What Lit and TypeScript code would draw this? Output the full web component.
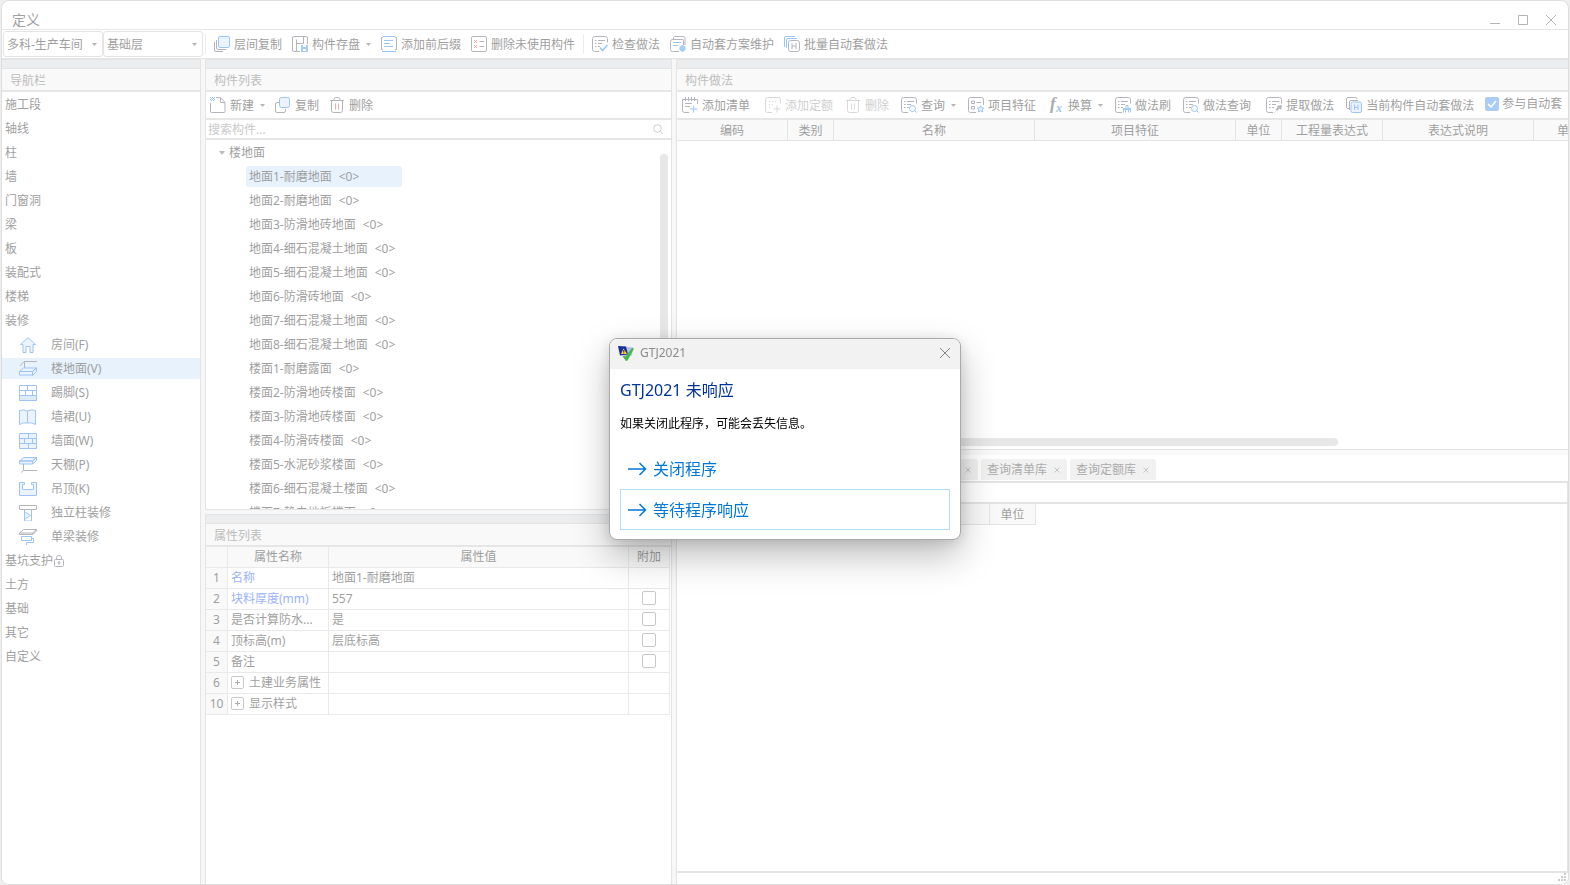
import { LitElement, html, svg, css, nothing, TemplateResult, SVGTemplateResult } from "lit";
import { customElement, property, state } from "lit/decorators.js";
import { classMap } from "lit/directives/class-map.js";

const base = css`
  * { box-sizing: border-box; }
  button, input, select {
    font: inherit;
    color: inherit;
    border: 0;
    padding: 0;
    margin: 0;
    background: none;
  }
  svg { display: block; flex: none; fill: none; }
  .g { stroke: #b4b5bc; }
  .b { stroke: #9cc5f6; }
  .r { stroke: #f3adad; }
  .f { fill: #ebf4fe; }
  .fb { fill: #a6ccf7; }
  .fr { fill: #f3adad; }
  .fg { fill: #b4b5bc; }
`;

/* 16 x 16 toolbar glyphs */
const sheet = svg`<path class="g" d="M7 15.500H2.500Q.5 15.500 .5 13.500V2.500Q.5.500 2.500.500H13.500Q15.500.500 15.500 2.500V6.500"/>
  <path class="g" d="M3 4.500h1.500M6 4.500h7M3 7.500h1.500M6 7.500h4M3 10.500h1.500M6 10.500h2"/>`;

const glyphs: Record<string, SVGTemplateResult> = {
  layers: svg`<path class="g" d="M2.500 4v8q0 1.500 1.500 1.500h8M.5 6v8q0 1.500 1.500 1.500h7"/><rect class="b f" x="4.500" y=".5" width="11" height="11" rx="1.500"/>`,
  save: svg`<path class="g" d="M8 15.500H2q-1.500 0-1.500-1.500V2Q.5.500 2 .5h12Q15.500.500 15.500 2v6M4.500 3.500v12M4.500 7.500h7M11.500 .5v7"/><path class="fb" d="M9 9h7v7H9z"/><path d="M11 9h3v2h-3zM11 13h3v2h-3z" fill="#fff"/>`,
  affix: svg`<path class="g" d="M2 1.500H.5v12H2M14 1.500h1.500v12H14"/><path class="b" d="M2 .5h12M3 4.500h9M3 7.500h6M3 10.500h9M1 15.500h14"/>`,
  unused: svg`<rect class="g" x=".5" y=".5" width="15" height="15" rx="1.500"/><path class="r" d="M3 4l3 3M6 4L3 7M3 9l3 3M6 9l-3 3"/><path class="g" d="M8.500 5.500H13M8.500 10.500H13"/>`,
  check: svg`${sheet}<path class="b" stroke-width="1.500" d="M8 11.500l2.500 3 5-5.500"/>`,
  scheme: svg`<path class="g" d="M3.500 3V1.500q0-1 1-1h9q1.500 0 1.500 1.500V9M13.500 9V4.500q0-1-1-1h-10q-2 0-2 2v8q0 2 2 2H9"/><path class="b" d="M3 6.500h8M3 9.500h5"/><path class="fb" d="M12.500 9l3 1.700v3.500l-3 1.700-3-1.700v-3.500z"/>`,
  batch: svg`<path class="b" d="M.5 11V2q0-1.500 1.500-1.500h9M2.500 12V4q0-1.500 1.500-1.500h9"/><rect class="g" x="4.500" y="4.500" width="11" height="11" rx="2"/><path class="g" d="M8 7v6M12 7v6M8 10h4"/>`,
  create: svg`<path class="g" d="M.5 6v8.500q0 1 1 1h12.500q1 0 1-1V5.500L10.500.500H6M10.500.500v5H15"/><path class="b" stroke-dasharray="1 1" d="M0 .5h5M1 1.500h4M0 2.500h5M1 3.500h4"/>`,
  copy: svg`<path class="g" d="M4 5.500H2q-1.500 0-1.500 1.500v7q0 1.500 1.500 1.500h7q1.500 0 1.500-1.500v-2"/><rect class="b f" x="4.500" y=".5" width="10" height="10" rx="2"/>`,
  trash: svg`<path class="g" d="M1 3.500h14M2.500 4v9.500q0 2 2 2h7q2 0 2-2V4M5 3.500v-1q0-2 2-2h2q2 0 2 2v1"/><path class="r" d="M6.500 6.500v6M9.500 6.500v6"/>`,
  trashOff: svg`<path class="g" d="M1 3.500h14M2.500 4v9.500q0 2 2 2h7q2 0 2-2V4M5 3.500v-1q0-2 2-2h2q2 0 2 2v1M6.500 6.500v6M9.500 6.500v6"/>`,
  addList: svg`<path class="g" d="M7 15.500H2.500Q.5 15.500.5 13.500V2.500H15.500V7M3.500 0v4M6.500 0v4M9.500 0v4M12.500 0v4M3 6.500h7M3 9.500h5"/><path class="b" d="M8 12h7.500M11.700 8.500v7"/>`,
  addQuota: svg`<path class="g" d="M7 15.500H2.500Q.5 15.500 .5 13.500V2.500Q.5.500 2.500.500H13.500Q15.500.500 15.500 2.500V6.500M8.500 12h7M12 8.500v7"/><path class="g" stroke-dasharray="1 2" d="M4 4.500h9M4 7.500h6M4 10.500h3"/>`,
  query: svg`${sheet}<circle class="b" cx="11.500" cy="11.500" r="3"/><path class="b" d="M13.700 13.700l2 2"/>`,
  feature: svg`<path class="g" d="M8 15.500H2.500Q.5 15.500 .5 13.500V2.500Q.5.500 2.500.500H13.500Q15.500.500 15.500 2.500V8M3.500 4h3v2.500h-3zM3.500 9.500h3V12h-3zM8.500 5.500H13"/><path class="b f" d="M12.500 8.700l1 2.200 2.300.3-1.700 1.500.4 2.300-2-1.200-2 1.200.4-2.300-1.700-1.500 2.300-.3z"/>`,
  fx: svg`<text x="2" y="12" font-family="Liberation Serif, serif" font-style="italic" font-weight="bold" font-size="17" fill="#a9aab1">f</text><text x="8" y="15" font-family="Liberation Serif, serif" font-style="italic" font-weight="bold" font-size="12" fill="#9cc5f6">x</text>`,
  brush: svg`${sheet}<path class="b" d="M8.500 15.500v-4h7v4M11 11V8.500h2V11M10.500 13v2.500M13.500 13v2.500"/><path class="fb" d="M8 11h8v2H8z"/>`,
  extract: svg`${sheet}<path class="fg" d="M16 8l-1 5-1.500-1.500L11 14l-1.500-1.500L12 10l-1.500-1z"/><path class="b" d="M9.500 14.500l-1 1"/>`,
  current: svg`<path class="g" d="M3 11.500H2q-1.500 0-1.500-1.500V2Q.5.500 2 .5h7.500q1.500 0 1.500 1.500M3.500 13V5q0-1.500 1.500-1.500h7"/><rect class="b f" x="5" y="5" width="10.500" height="10.500" rx="1.500"/><path class="b" d="M8.500 7.500v5.500M12 7.500v5.500M8.500 10.300H12"/>`,
};

/* 18 x 16 navigation glyphs */
const navGlyphs: Record<string, SVGTemplateResult> = {
  room: svg`<path class="b f" d="M1.500 7.500L9 .7l7.500 6.800H14v8h-3V9.500H7v6H4v-8z"/>`,
  floor: svg`<path class="g" d="M1 5L5 .5h13M5.500 1v6"/><path class="b f" d="M.5 10.500l4-3.500h13l-4 3.500zM.5 10.500h13V14H.5zM13.500 10.500l4-3.500v3.500l-4 4z"/>`,
  skirting: svg`<path class="b" d="M.5.500h17v15H.5zM.5 5.500h17M8.500.500v5M6.500 5.500v5M13.500 5.500v5"/><path class="b" fill="#dcebfd" d="M.5 10.500h17v5H.5z"/>`,
  dado: svg`<path class="b f" d="M.5 1.500q4-1.500 8 .5v12q-4-1-8 1.500zM8.500 2q4-2 8-.5v14q-4-2.500-8-1.500z"/>`,
  wall: svg`<path class="b f" d="M.5.500h17v15H.5z"/><path class="b" d="M.5 5.500h17M.5 10.500h17M9.500.500v5M5.500 5.500v5M13.500 5.500v5M9.500 10.500v5"/>`,
  canopy: svg`<path class="b f" d="M.5 4l4-3.500h13l-4 3.500zM.5 4h13v3H.5zM13.500 4l4-3.500v3l-4 3.500z"/><path class="g" d="M4.500 7v6.500L2 15.500M4.500 13.500H18"/>`,
  ceiling: svg`<path class="b f" d="M.5 1.500h5v2h-2v5h11v-5h-2v-2h5v13H.5z"/>`,
  column: svg`<path class="g" d="M.5.500h17v4H.5zM5.500 5v2"/><path class="b" d="M5.500 5v11h7V5"/><path class="b f" d="M5.500 6.500l6 4-6 4z"/>`,
  beam: svg`<path class="g" d="M.5 4l4-3.500h13l-4 3.500zM.5 4v1.500h13V4M13.500 5.500l4-3.500V.5"/><path class="b" d="M2.500 7.500h10v4h-10zM12.500 9.500h2v4h-7V16"/>`,
};

const icon = (name: string) => html`<svg width="16" height="16" viewBox="0 0 16 16" aria-hidden="true">${glyphs[name]}</svg>`;
const caret = html`<svg class="caret" width="5" height="3" viewBox="0 0 5 3" aria-hidden="true"><path d="M0 0h5L2.500 3z" fill="#b5b5b5"/></svg>`;

interface Tool {
  icon: string;
  label: string;
  menu?: boolean;
  off?: boolean;
  wide?: boolean;
}

@customElement("tool-button")
class ToolButton extends LitElement {
  @property({ attribute: false }) tool!: Tool;

  static styles = [base, css`
    :host { display: block; flex: none; }
    .btn { display: flex; align-items: center; gap: 4px; height: 23px; white-space: nowrap; line-height: 20px; }
    .label { padding-top: 2px; }
    .caret { margin-left: 2px; }
    .off { opacity: 0.5; }
  `];

  render() {
    const t = this.tool;
    return html`<button class=${classMap({ btn: true, off: !!t.off })} ?disabled=${t.off}>
      ${icon(t.icon)}<span class="label">${t.label}</span>${t.menu ? caret : nothing}
    </button>`;
  }
}

@customElement("tool-strip")
class ToolStrip extends LitElement {
  @property({ attribute: false }) tools: Tool[] = [];

  static styles = [base, css`
    :host { display: flex; align-items: center; gap: 10px; flex: none; }
    .wide { margin-right: 3px; }
  `];

  render() {
    return this.tools.map((t) => html`<tool-button class=${classMap({ wide: !!t.wide })} .tool=${t}></tool-button>`);
  }
}

@customElement("nav-tree")
class NavTree extends LitElement {
  @state() private selected = "楼地面(V)";

  private before = ["施工段", "轴线", "柱", "墙", "门窗洞", "梁", "板", "装配式", "楼梯", "装修"];
  private children_: [string, string][] = [
    ["room", "房间(F)"], ["floor", "楼地面(V)"], ["skirting", "踢脚(S)"], ["dado", "墙裙(U)"], ["wall", "墙面(W)"],
    ["canopy", "天棚(P)"], ["ceiling", "吊顶(K)"], ["column", "独立柱装修"], ["beam", "单梁装修"],
  ];
  private after = ["基坑支护", "土方", "基础", "其它", "自定义"];

  static styles = [base, css`
    :host { display: flex; flex-direction: column; gap: 3px; padding-top: 2px; }
    .row { display: flex; align-items: center; height: 21px; padding-left: 3px; width: 100%; text-align: left; line-height: 21px; }
    .child { padding-left: 17px; gap: 14px; }
    .on { background: #e7f2fd; }
  `];

  private group(name: string) {
    const lock = name === "基坑支护"
      ? html`<svg width="12" height="12" viewBox="0 0 12 12" aria-hidden="true"><rect class="g" x="1.500" y="4.500" width="9" height="7" rx="1"/><path class="g" d="M3.500 4.500v-2q0-2 2.500-2t2.500 2v2M6 8v2"/><circle class="g" cx="6" cy="7.500" r="1"/></svg>`
      : nothing;
    return html`<button class="row">${name}${lock}</button>`;
  }

  render() {
    return html`
      ${this.before.map((n) => this.group(n))}
      ${this.children_.map(([g, n]) => html`
        <button class=${classMap({ row: true, child: true, on: n === this.selected })} @click=${() => (this.selected = n)}>
          <svg width="18" height="16" viewBox="0 0 18 16" aria-hidden="true">${navGlyphs[g]}</svg>${n}
        </button>`)}
      ${this.after.map((n) => this.group(n))}
    `;
  }
}

@customElement("component-tree")
class ComponentTree extends LitElement {
  @state() private selected = 0;

  private items = [
    "地面1-耐磨地面", "地面2-耐磨地面", "地面3-防滑地砖地面", "地面4-细石混凝土地面", "地面5-细石混凝土地面",
    "地面6-防滑砖地面", "地面7-细石混凝土地面", "地面8-细石混凝土地面", "楼面1-耐磨露面", "楼面2-防滑地砖楼面",
    "楼面3-防滑地砖楼面", "楼面4-防滑砖楼面", "楼面5-水泥砂浆楼面", "楼面6-细石混凝土楼面", "楼面7-静电地板楼面",
  ];

  static styles = [base, css`
    :host { display: flex; position: relative; overflow: hidden; padding-top: 2px; }
    .list { display: flex; flex-direction: column; align-items: flex-start; gap: 3px; }
    .row { display: flex; flex: none; align-items: center; height: 21px; line-height: 21px; white-space: nowrap; }
    .root { padding-left: 13px; gap: 4px; }
    .item { margin-left: 40px; padding-left: 3px; gap: 7px; width: 156px; border-radius: 3px; }
    .on { background: #e7f2fd; }
    .bar { position: absolute; top: 14px; right: 3px; width: 8px; height: 240px; border-radius: 4px; background: #e7e7e7; }
  `];

  render() {
    return html`
      <div class="list">
        <button class="row root"><svg width="6" height="4" viewBox="0 0 6 4" aria-hidden="true"><path d="M0 0h6L3 4z" fill="#bbb"/></svg>楼地面</button>
        ${this.items.map((n, i) => html`
          <button class=${classMap({ row: true, item: true, on: i === this.selected })} @click=${() => (this.selected = i)}>
            <span>${n}</span><span>&lt;0&gt;</span>
          </button>`)}
      </div>
      <div class="bar"></div>
    `;
  }
}

interface Prop {
  no: number;
  name: string;
  value?: string;
  key?: boolean;
  tick?: boolean;
  group?: boolean;
}

@customElement("property-table")
class PropertyTable extends LitElement {
  private rows: Prop[] = [
    { no: 1, name: "名称", value: "地面1-耐磨地面", key: true },
    { no: 2, name: "块料厚度(mm)", value: "557", key: true, tick: true },
    { no: 3, name: "是否计算防水...", value: "是", tick: true },
    { no: 4, name: "顶标高(m)", value: "层底标高", tick: true },
    { no: 5, name: "备注", tick: true },
    { no: 6, name: "土建业务属性", group: true },
    { no: 10, name: "显示样式", group: true },
  ];

  static styles = [base, css`
    :host { display: block; padding-right: 1px; }
    table { width: 100%; table-layout: fixed; border-collapse: separate; border-spacing: 0; }
    th, td {
      height: 21px; padding: 0 0 0 3px; border: solid #e9e9e9; border-width: 0 1px 1px 0;
      font-weight: normal; line-height: 20px; white-space: nowrap; overflow: hidden; text-align: left;
    }
    thead th, tbody th { background: #f9f9f9; text-align: center; padding: 0; }
    .no { width: 22px; }
    .name { width: 101px; }
    .add { width: 41px; }
    .key { color: #9bb2fd; }
    .mid { text-align: center; padding: 0 0 1px; }
    .group { display: flex; align-items: center; gap: 5px; }
    .plus { display: grid; place-items: center; width: 13px; height: 13px; border: 1px solid #c9c9c9; border-radius: 2px; }
    input { appearance: none; display: block; width: 14px; height: 14px; margin: 0 auto; border: 1px solid #c8c8c8; border-radius: 2px; }
  `];

  render() {
    return html`
      <table>
        <thead>
          <tr><th class="no"></th><th class="name">属性名称</th><th>属性值</th><th class="add">附加</th></tr>
        </thead>
        <tbody>
          ${this.rows.map((r) => html`
            <tr>
              <th>${r.no}</th>
              <td class=${classMap({ key: !!r.key })}>
                ${r.group
                  ? html`<div class="group"><button class="plus" aria-label="展开"><svg width="5" height="5" viewBox="0 0 5 5"><path d="M0 2.500h5M2.500 0v5" stroke="#aaa"/></svg></button>${r.name}</div>`
                  : r.name}
              </td>
              <td>${r.value ?? nothing}</td>
              <td class="mid">${r.tick ? html`<input type="checkbox" aria-label=${r.name} />` : nothing}</td>
            </tr>`)}
        </tbody>
      </table>
    `;
  }
}

@customElement("hang-dialog")
class HangDialog extends LitElement {
  static styles = [base, css`
    :host { position: fixed; inset: 0; display: grid; place-items: center; padding-bottom: 7px; pointer-events: none; }
    .dialog {
      pointer-events: auto; width: 352px; background: #fff; border: 1px solid #a9a9a9; border-radius: 8px; overflow: hidden;
      box-shadow: 0 16px 36px rgba(0, 0, 0, 0.26), 0 2px 14px rgba(0, 0, 0, 0.12);
    }
    .bar { display: flex; align-items: center; gap: 6px; height: 30px; padding: 0 9px 2px 8px; background: #f2f2f2; color: #8b8b8b; }
    .bar span { flex: 1; line-height: 20px; }
    .bar button { display: block; }
    .body { padding: 9px 10px; }
    h1 { margin: 0; color: #003399; font-size: 16px; font-weight: normal; line-height: 24px; }
    p { margin: 12px 0 14px; color: #000; line-height: 20px; }
    .cmd {
      display: flex; align-items: center; gap: 6px; width: 100%; height: 41px; padding: 1px 0 0 7px;
      border: 1px solid transparent; color: #0077d7; font-size: 16px; line-height: 24px;
    }
    .focus { border-color: #b5dbf7; }
  `];

  private arrow = html`<svg width="19" height="14" viewBox="0 0 19 14" aria-hidden="true"><path d="M0 7h17.500M11.500 1l6 6-6 6" stroke="#0077d7" stroke-width="1.500"/></svg>`;

  render() {
    return html`
      <div class="dialog" role="dialog" aria-labelledby="t">
        <div class="bar">
          <svg width="16" height="16" viewBox="0 0 16 16" aria-hidden="true">
            <path d="M6 1.500l9 1-1 8L6 12z" fill="#b9c4d6"/>
            <path d="M0 1l8 .5 2 8-8 1z" fill="#1a2f9e"/>
            <path d="M5.500 3.500L9 9H3z" fill="#ffd93a"/><path d="M5.800 5v2M5.800 7.500v1" stroke="#222"/>
            <path d="M4 10.500l3.500 1L14 3l2 .5L9.500 15.500 8 16z" fill="#45b649"/>
          </svg>
          <span>GTJ2021</span>
          <button aria-label="关闭"><svg width="12" height="12" viewBox="0 0 12 12"><path d="M1 1l10 10M11 1L1 11" stroke="#858585"/></svg></button>
        </div>
        <div class="body">
          <h1 id="t">GTJ2021 未响应</h1>
          <p>如果关闭此程序，可能会丢失信息。</p>
          <button class="cmd">${this.arrow}关闭程序</button>
          <button class="cmd focus">${this.arrow}等待程序响应</button>
        </div>
      </div>
    `;
  }
}

@customElement("app-root")
class AppRoot extends LitElement {
  static styles = [base, css`
    :host {
      display: flex; height: 100vh; padding: 0 1px 1px; background: #efefef; color: #9f9f9f;
      font: 12px/20px "Noto Sans", "Noto Sans CJK SC", sans-serif;
    }
    .window { flex: 1; min-width: 0; display: flex; flex-direction: column; border: 1px solid #dedede; border-radius: 8px; overflow: hidden; background: #fff; }
    .title { display: flex; align-items: center; height: 29px; padding: 9px 12px 0 10px; border-bottom: 1px solid #e6e6e6; font-size: 14px; }
    .title h1 { flex: 1; margin: 0; font: inherit; }
    .winbtns { display: flex; gap: 18px; }
    .top { display: flex; align-items: center; height: 29px; padding-left: 1px; border-bottom: 1px solid #e4e4e4; }
    .combo { display: grid; align-items: center; width: 100px; }
    .combo > * { grid-area: 1 / 1; }
    .combo select { appearance: none; height: 26px; padding: 1px 3px 0; border: 1px solid #e4e4e4; border-radius: 3px; line-height: 20px; }
    .combo .caret { justify-self: end; margin-right: 6px; pointer-events: none; }
    .sep { width: 1px; height: 20px; margin: 0 8px; background: #ececec; }
    .sep.first { margin: 0 8px 0 2px; }

    .main { flex: 1; min-height: 0; display: grid; grid-template-columns: 199px 467px minmax(0, 1fr); gap: 4px; background: #f7f7f7; }
    .split { display: grid; grid-template-rows: minmax(0, 450fr) minmax(0, 370fr); gap: 4px; min-height: 0; }
    .work { display: grid; grid-template-rows: minmax(0, 390fr) minmax(0, 434fr); min-height: 0; background: #fff; }
    .panel { display: flex; flex-direction: column; min-width: 0; min-height: 0; background: #fff; border: solid #e4e4e4; border-width: 1px 0 0 1px; overflow: hidden; }
    .nav { border-width: 1px 1px 0 0; }
    .boxed { border-width: 1px; }
    .low { border-width: 1px 1px 0; }
    .grip { flex: none; height: 9px; background: #ecedef; border-bottom: 1px solid #e4e4e4; }
    .head { flex: none; height: 23px; margin: 0; padding: 1px 8px 0; border-bottom: 2px solid #e6e6e6; background: #f9f9f9; color: #bdbdbd; font: inherit; line-height: 21px; }
    .bar { flex: none; display: flex; align-items: center; height: 28px; padding-left: 4px; border-bottom: 2px solid #e6e6e6; white-space: nowrap; }
    .methodbar { gap: 11px; padding-left: 5px; }
    .methodbar tool-strip { gap: 12px; }
    .search { flex: none; display: flex; align-items: center; height: 20px; padding: 0 8px 0 2px; border-bottom: 2px solid #e6e6e6; }
    .search input { flex: 1; height: 18px; padding-top: 2px; outline: 0; }
    .search input::placeholder { color: #c9c9c9; opacity: 1; }
    component-tree { flex: 1; min-height: 0; }

    table { border-collapse: separate; border-spacing: 0; table-layout: fixed; }
    th { height: 21px; padding: 1px 0 0; border: solid #e4e4e4; border-width: 0 1px 1px 0; background: #f9f9f9; font-weight: normal; line-height: 19px; white-space: nowrap; }
    .methods { width: 928px; }
    .scroll { flex: 1; overflow: hidden; }
    .hbar { flex: none; width: 661px; height: 8px; margin-bottom: 3px; border-radius: 4px; background: #e7e7e7; }
    .join { display: flex; align-items: center; gap: 3px; padding-bottom: 2px; }
    .join input { appearance: none; width: 14px; height: 14px; border-radius: 2px; background: #a9cdf6; }
    .tick { display: grid; }
    .tick > * { grid-area: 1 / 1; }
    .tick svg { pointer-events: none; }

    .lower { display: flex; flex-direction: column; min-height: 0; border: solid #e4e4e4; border-width: 1px 0 0 1px; }
    .rim { flex: none; height: 5px; background: #f9f9f9; }
    .tabs { flex: none; display: flex; align-items: flex-end; gap: 3px; height: 26px; padding: 0 0 1px 215px; }
    .tab { display: flex; align-items: center; justify-content: space-between; width: 86px; height: 21px; padding: 0 7px 0 6px; border-radius: 3px 3px 0 0; background: #f1f1f1; color: #ababab; }
    .pane { flex: 1; min-height: 0; border: solid #e4e4e4; border-width: 2px 1px 2px 0; }
    .strip { height: 21px; border-bottom: 2px solid #e4e4e4; }
    .prices { width: 359px; }
    .foot { flex: none; display: flex; justify-content: flex-end; height: 11px; padding-right: 2px; }
  `];

  private topA: Tool[] = [
    { icon: "layers", label: "层间复制" },
    { icon: "save", label: "构件存盘", menu: true },
    { icon: "affix", label: "添加前后缀" },
    { icon: "unused", label: "删除未使用构件" },
  ];
  private topB: Tool[] = [
    { icon: "check", label: "检查做法" },
    { icon: "scheme", label: "自动套方案维护" },
    { icon: "batch", label: "批量自动套做法" },
  ];
  private listTools: Tool[] = [
    { icon: "create", label: "新建", menu: true },
    { icon: "copy", label: "复制" },
    { icon: "trash", label: "删除" },
  ];
  private methodTools: Tool[] = [
    { icon: "addList", label: "添加清单", wide: true },
    { icon: "addQuota", label: "添加定额", off: true },
    { icon: "trashOff", label: "删除", off: true },
    { icon: "query", label: "查询", menu: true },
    { icon: "feature", label: "项目特征" },
    { icon: "fx", label: "换算", menu: true },
    { icon: "brush", label: "做法刷" },
    { icon: "query", label: "做法查询", wide: true },
    { icon: "extract", label: "提取做法" },
    { icon: "current", label: "当前构件自动套做法" },
  ];
  private columns: [string, number][] = [
    ["编码", 111], ["类别", 46], ["名称", 201], ["项目特征", 201], ["单位", 46], ["工程量表达式", 101], ["表达式说明", 151], ["单价", 71],
  ];

  private combo(label: string, value: string): TemplateResult {
    return html`<div class="combo"><select aria-label=${label}><option>${value}</option></select>${caret}</div>`;
  }

  private tab(label: string): TemplateResult {
    return html`<div class="tab"><span>${label}</span><button aria-label="关闭标签"><svg width="6" height="6" viewBox="0 0 6 6"><path d="M.5.500l5 5M5.500.500l-5 5" stroke="#c4c4c4"/></svg></button></div>`;
  }

  render() {
    return html`
      <div class="window">
        <header class="title">
          <h1>定义</h1>
          <div class="winbtns">
            <button aria-label="最小化"><svg width="10" height="10" viewBox="0 0 10 10"><path d="M0 8.500h10" stroke="#b5b5b5"/></svg></button>
            <button aria-label="最大化"><svg width="10" height="10" viewBox="0 0 10 10"><path d="M.5.500h9v9h-9z" stroke="#b5b5b5"/></svg></button>
            <button aria-label="关闭"><svg width="10" height="10" viewBox="0 0 10 10"><path d="M0 0l10 10M10 0L0 10" stroke="#b5b5b5"/></svg></button>
          </div>
        </header>

        <div class="top">
          ${this.combo("工程", "多科-生产车间")}${this.combo("楼层", "基础层")}
          <div class="sep first"></div>
          <tool-strip .tools=${this.topA}></tool-strip>
          <div class="sep"></div>
          <tool-strip .tools=${this.topB}></tool-strip>
        </div>

        <main class="main">
          <nav class="panel nav">
            <div class="grip"></div>
            <h2 class="head">导航栏</h2>
            <nav-tree></nav-tree>
          </nav>

          <div class="split">
            <section class="panel boxed">
              <div class="grip"></div>
              <h2 class="head">构件列表</h2>
              <div class="bar"><tool-strip .tools=${this.listTools}></tool-strip></div>
              <div class="search">
                <input type="text" placeholder="搜索构件..." aria-label="搜索构件" />
                <svg width="10" height="10" viewBox="0 0 10 10" aria-hidden="true"><circle cx="4.500" cy="4.500" r="3.800" stroke="#cdcdcd"/><path d="M7.200 7.200L10 10" stroke="#cdcdcd"/></svg>
              </div>
              <component-tree></component-tree>
            </section>
            <section class="panel low">
              <div class="grip"></div>
              <h2 class="head">属性列表</h2>
              <property-table></property-table>
            </section>
          </div>

          <div class="work">
            <section class="panel">
              <div class="grip"></div>
              <h2 class="head">构件做法</h2>
              <div class="bar methodbar">
                <tool-strip .tools=${this.methodTools}></tool-strip>
                <label class="join">
                  <span class="tick"><input type="checkbox" checked /><svg width="14" height="14" viewBox="0 0 14 14" aria-hidden="true"><path d="M3 7l3 3 5-6" stroke="#fff" stroke-width="1.500"/></svg></span>
                  参与自动套
                </label>
              </div>
              <div class="scroll">
                <table class="methods">
                  <colgroup>${this.columns.map(([, w]) => html`<col width=${w} />`)}</colgroup>
                  <thead><tr>${this.columns.map(([n]) => html`<th>${n}</th>`)}</tr></thead>
                </table>
              </div>
              <div class="hbar"></div>
            </section>

            <section class="lower">
              <div class="rim"></div>
              <div class="tabs">${this.tab("")}${this.tab("查询清单库")}${this.tab("查询定额库")}</div>
              <div class="pane">
                <div class="strip"></div>
                <table class="prices">
                  <colgroup><col /><col width="46" /></colgroup>
                  <thead><tr><th></th><th>单位</th></tr></thead>
                </table>
              </div>
              <div class="foot">
                <svg width="8" height="8" viewBox="0 0 8 8" aria-hidden="true"><path d="M6 0h2v2H6zM3 3h2v2H3zM6 3h2v2H6zM0 6h2v2H0zM3 6h2v2H3zM6 6h2v2H6z" fill="#cacaca"/></svg>
              </div>
            </section>
          </div>
        </main>
      </div>
      <hang-dialog></hang-dialog>
    `;
  }
}
